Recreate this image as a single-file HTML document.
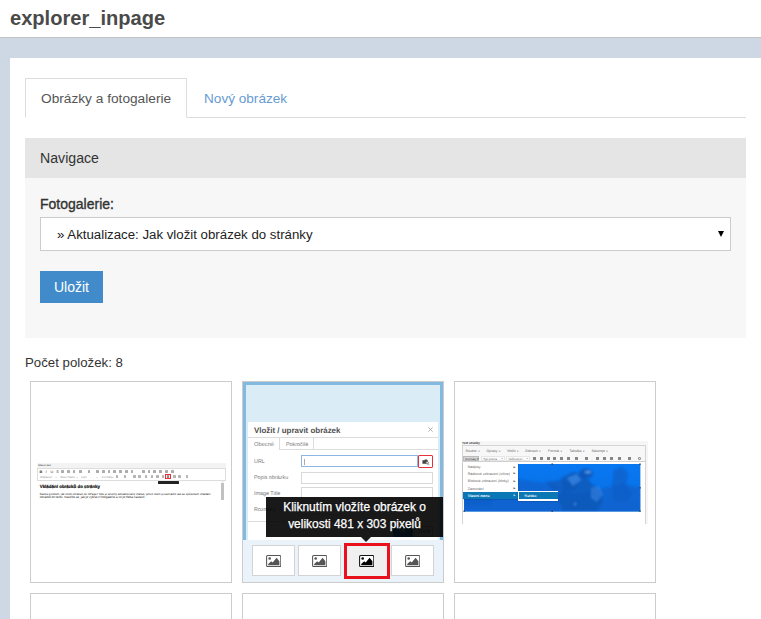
<!DOCTYPE html>
<html lang="cs">
<head>
<meta charset="utf-8">
<title>explorer_inpage</title>
<style>
*{box-sizing:border-box}
html,body{margin:0;padding:0}
body{width:761px;height:619px;overflow:hidden;background:#cdd8e4;font-family:"Liberation Sans",sans-serif;font-size:14px;color:#333;position:relative}
.top{position:absolute;left:0;top:0;width:761px;height:38px;background:#fff;border-bottom:1px solid #c2c2c2}
.top h1{position:absolute;left:10px;top:7px;margin:0;font-size:20.1px;line-height:22px;font-weight:bold;color:#4a4a4a;white-space:nowrap}
.panel{position:absolute;left:10px;top:58px;width:760px;height:600px;background:#fff}
.tabs{position:absolute;left:15px;top:20px;width:721px;height:40px;border-bottom:1px solid #ddd}
.tab{position:absolute;top:0;height:40px;line-height:40px;white-space:nowrap;font-size:14px}
.tab.active{left:0;width:162px;border:1px solid #ddd;border-bottom:1px solid #fff;font-size:13.7px;background:#fff;color:#555;padding-left:15px;line-height:40px}
.tab.link{left:179px;color:#679bd2;font-size:13.6px;line-height:41px}
.nav{position:absolute;left:15px;top:80px;width:721px;height:200px;background:#f7f7f7}
.nav .hd{height:40px;background:#e5e5e5;line-height:40px;padding-left:15px;font-size:14.15px;color:#333}
.lbl{position:absolute;left:15px;top:57px;font-size:14px;color:#333;line-height:18px;-webkit-text-stroke:0.35px #333}
.sel{position:absolute;left:15px;top:79px;width:691px;height:34px;border:1px solid #ccc;background:#fff;line-height:34px;padding-left:16px;font-size:13.25px;color:#222}
.sel i{position:absolute;left:676.6px;top:13.2px;width:0;height:0;border-left:3.4px solid transparent;border-right:3.4px solid transparent;border-top:6.6px solid #000}
.btn{position:absolute;left:15px;top:133px;width:63px;height:32px;background:#428bca;color:#fff;font-size:14px;line-height:33px;text-align:center}
.cnt{position:absolute;left:15px;top:295px;line-height:20px;font-size:13.25px;color:#333}
.it{position:absolute;width:202px;height:202px;border:1px solid #ccc;background:#fff;overflow:hidden}

#ov{position:absolute;left:0;top:0;width:761px;height:619px;overflow:hidden;text-rendering:geometricPrecision}
#ov div,#ov span,#ov i{position:absolute;white-space:nowrap;line-height:1}
/* thumb 2 */
.t2ring{left:243px;top:382px;width:200px;height:200px;background:#daedf6;border:3px solid #82b9e0}
.t2dlg{left:248.4px;top:422.3px;width:189.5px;height:120px;background:#fff}
.t2dlg .ttl{left:5.6px;top:4.7px;font-size:7.95px;font-weight:bold;color:#505050}
.t2dlg .x{left:179px;top:3.2px;font-size:8px;color:#999}
.t2dlg .l1{left:0;top:14.6px;width:189.5px;height:0.8px;background:#ddd}
.t2dlg .tb1{left:0;top:15.4px;width:31.3px;height:12.1px;border-right:0.8px solid #ddd;background:#fff}
.t2dlg .tb2{left:31.3px;top:15.4px;width:34.6px;height:12.1px;border-right:0.8px solid #ddd;border-bottom:0.8px solid #ddd}
.t2dlg .l2{left:65.9px;top:26.7px;width:123.6px;height:0.8px;background:#ddd}
.t2dlg .tx{font-size:5.4px;color:#777}
.t2dlg .lb{left:5.6px;font-size:5.4px;color:#777}
.t2dlg .in{left:53px;width:131.2px;height:12px;border:0.8px solid #d9d9d9;background:#fff}
.t2tip{text-rendering:auto;left:266px;top:497px;width:177px;height:40px;background:rgba(0,0,0,.9);color:#fff;font-size:11.95px;text-align:center}
.t2tip span{left:0;width:177px;text-align:center;-webkit-text-stroke:0.25px #fff}
.t2arr{left:361.2px;top:536.7px;width:0;height:0;border-left:5px solid transparent;border-right:5px solid transparent;border-top:5px solid #1a1a1a}
.t2strip{left:243px;top:540px;width:200px;height:42px;background:#eaf3f9}
.t2b{top:545.4px;width:42.6px;height:31px;background:#fff;border:1px solid #d3d3d3}
.t2red{left:344px;top:543px;width:46px;height:36px;border:3px solid #e8111c;background:#f0f0f0}
#ov svg{position:absolute}

/* thumb 1 */
.t1 .ic{top:469.5px;width:2.5px;height:3px;background:#666;opacity:.55;border-radius:.6px}
.t1 .ic2{top:475.3px;width:2.6px;height:2.8px;background:#777;opacity:.55;border-radius:.6px}
.t1 .dd{top:476.2px;font-size:2.9px;color:#999}
.t1 p{position:absolute;margin:0;white-space:nowrap;line-height:1;font-size:2.62px;color:#222;left:39.7px}
/* thumb 3 */
.t3 .mn{top:449.7px;font-size:3.5px;color:#666}
.t3 .mi{left:467.8px;font-size:3.55px;color:#666}
.t3 .ar{left:513.6px;font-size:2.6px;color:#555}
.t3 .ti{top:456.7px;width:3px;height:3.6px;background:#555;opacity:.7}
</style>
</head>
<body>
<div class="top"><h1>explorer_inpage</h1></div>
<div class="panel">
  <div class="tabs">
    <div class="tab active">Obrázky a fotogalerie</div>
    <div class="tab link">Nový obrázek</div>
  </div>
  <div class="nav">
    <div class="hd">Navigace</div>
    <div class="lbl">Fotogalerie:</div>
    <div class="sel">» Aktualizace: Jak vložit obrázek do stránky<i></i></div>
    <div class="btn">Uložit</div>
  </div>
  <div class="cnt">Počet položek: 8</div>
  <div class="it" style="left:20px;top:323px"></div>
  <div class="it" style="left:232px;top:323px"></div>
  <div class="it" style="left:444px;top:323px"></div>
  <div class="it" style="left:20px;top:535px"></div>
  <div class="it" style="left:232px;top:535px"></div>
  <div class="it" style="left:444px;top:535px"></div>
</div>

<div id="ov">
<!-- thumb 1 -->
<div class="t1" style="left:0;top:0">
<div style="left:37px;top:463px;width:189px;height:37px;background:#fff"></div>
<div style="left:37px;top:463.4px;width:189px;height:4.6px;background:#f3f3f3"></div>
<span style="left:38.2px;top:464.9px;font-size:2.5px;font-weight:bold;color:#555">Hlavní text</span>
<div style="left:37.3px;top:467.5px;width:188.4px;height:13.1px;border:0.7px solid #ddd;background:#fff"></div>
<span style="left:39.6px;top:470.6px;font-size:3.8px;font-weight:bold;color:#333">B</span><span style="left:45.6px;top:470.6px;font-size:3.8px;font-style:italic;color:#333">I</span><span style="left:50.4px;top:470.6px;font-size:3.8px;color:#333">U</span><span style="left:56.2px;top:470.6px;font-size:3.8px;color:#333">S</span><i class="ic" style="left:61.4px"></i><i class="ic" style="left:67.0px"></i><i class="ic" style="left:72.8px"></i><i class="ic" style="left:79.0px"></i><i class="ic" style="left:87.7px"></i><i class="ic" style="left:96.3px"></i><i class="ic" style="left:102.2px"></i><i class="ic" style="left:107.7px"></i><i class="ic" style="left:113.1px"></i><i class="ic" style="left:119.0px"></i><i class="ic" style="left:125.0px"></i><i class="ic" style="left:130.7px"></i><i class="ic" style="left:142.1px"></i><i class="ic" style="left:147.6px"></i><i class="ic" style="left:153.1px"></i><i class="ic" style="left:159.0px"></i><i class="ic" style="left:165.2px"></i><i class="ic" style="left:171.2px"></i>
<i class="ic2" style="left:115.6px"></i><i class="ic2" style="left:123.6px"></i><i class="ic2" style="left:133.1px"></i><i class="ic2" style="left:138.2px"></i><i class="ic2" style="left:144.9px"></i><i class="ic2" style="left:150.6px"></i><i class="ic2" style="left:156.2px"></i><i class="ic2" style="left:161.6px"></i><i class="ic2" style="left:173.1px"></i><i class="ic2" style="left:178.2px"></i><i class="ic2" style="left:185.6px"></i>
<span class="dd" style="left:40px">Odstavec</span><span class="dd" style="left:55.5px;font-size:2px;top:476.6px">▾</span><span class="dd" style="left:60.2px">Open Sans</span><span class="dd" style="left:76.6px;font-size:2px;top:476.6px">▾</span><span class="dd" style="left:81px">12pt</span><span class="dd" style="left:96.6px;font-size:2px;top:476.6px">▾</span><span class="dd" style="left:101.8px">Formáty</span><span class="dd" style="left:112.3px;font-size:2px;top:476.6px">▾</span>
<div style="left:165.4px;top:473.6px;width:5.8px;height:5.6px;border:0.8px solid #e8303a;background:#fbe3e3"></div><i class="ic2" style="left:166.9px;background:#444"></i>
<div style="left:157.6px;top:480.6px;width:21.4px;height:3.5px;background:#222;border-radius:.5px"><span style="left:2px;top:.8px;font-size:1.75px;color:#fff">Vložit / upravit obrázek</span></div>
<div style="left:221px;top:481.3px;width:3.3px;height:18.7px;background:#f1f1f1"></div><div style="left:221.3px;top:483.4px;width:2.7px;height:16.6px;background:#c1c1c1"></div>
<span style="left:39.7px;top:484.9px;font-size:4.45px;font-weight:bold;color:#111;-webkit-text-stroke:.2px #222">Vkládání obrázků do stránky</span>
<p style="top:493px;font-size:2.88px" id="p1">Řešíte problém, jak vložit obrázek do inPage? Zde je stručný aktualizovaný článek, jehož cílem je seznámit vás se způsobem vkládání</p>
<p style="top:495.9px;font-size:3.1px" id="p2">obrázků do textu. Naučíte se, jak je vybrat z fotogalerie a co je třeba nastavit.</p>
</div>
<!-- thumb 3 -->
<div class="t3" style="left:0;top:0">
<div style="left:461.5px;top:440.5px;width:186.5px;height:83.2px;background:#f6f6f6"></div>
<span style="left:462px;top:442.2px;font-size:3.1px;font-weight:bold;color:#333">Text stránky</span>
<div style="left:462.3px;top:445.3px;width:183.6px;height:79px;border:0.7px solid #d4d4d4;border-bottom:0;background:#fff"></div>
<div style="left:463px;top:446px;width:182.2px;height:15.5px;background:#f7f7f7;border-bottom:0.7px solid #d0d0d0"></div>
<span class="mn" style="left:465.5px">Soubor <span style="position:static;font-size:2.4px">▼</span></span><span class="mn" style="left:486.5px">Úpravy <span style="position:static;font-size:2.4px">▼</span></span><span class="mn" style="left:507.0px">Vložit <span style="position:static;font-size:2.4px">▼</span></span><span class="mn" style="left:525.0px">Zobrazit <span style="position:static;font-size:2.4px">▼</span></span><span class="mn" style="left:548.0px">Formát <span style="position:static;font-size:2.4px">▼</span></span><span class="mn" style="left:569.5px">Tabulka <span style="position:static;font-size:2.4px">▼</span></span><span class="mn" style="left:591.8px">Nástroje <span style="position:static;font-size:2.4px">▼</span></span>
<div style="left:463.2px;top:455.8px;width:16.3px;height:5.6px;background:#d8d8d8;border:0.5px solid #bbb"><span style="left:1px;top:1.2px;font-size:3px;color:#333">Formáty ▾</span></div><div style="left:481px;top:455.8px;width:23.5px;height:5.6px;background:#fbfbfb;border:0.5px solid #e6e6e6"><span style="left:1.2px;top:1.2px;font-size:3px;color:#666">Typ písma</span><span style="left:19.5px;top:1.6px;font-size:2.2px;color:#666">▾</span></div><div style="left:506.2px;top:455.8px;width:23.5px;height:5.6px;background:#fbfbfb;border:0.5px solid #e6e6e6"><span style="left:1.2px;top:1.2px;font-size:3px;color:#666">Velikost pí...</span><span style="left:19.5px;top:1.6px;font-size:2.2px;color:#666">▾</span></div>
<i class="ti" style="left:532.6px"></i><i class="ti" style="left:540.0px"></i><i class="ti" style="left:547.1px"></i><i class="ti" style="left:553.1px"></i><i class="ti" style="left:559.6px"></i><i class="ti" style="left:566.6px"></i><i class="ti" style="left:575.1px"></i><i class="ti" style="left:584.6px"></i><i class="ti" style="left:596.1px"></i><i class="ti" style="left:602.6px"></i><i class="ti" style="left:609.6px"></i><i class="ti" style="left:617.6px"></i><i class="ti" style="left:627.6px"></i><i class="ti" style="left:637.6px;border-radius:50%;background:none;border:.5px solid #666"></i>
<svg style="left:464px;top:464px;overflow:visible" width="176.4" height="47.6" viewBox="0 0 176.4 47.6"><defs><linearGradient id="bg3" x1="0" y1="0" x2="0" y2="1"><stop offset="0" stop-color="#0878f2"/><stop offset=".45" stop-color="#0973ea"/><stop offset="1" stop-color="#0b69da"/></linearGradient><clipPath id="cp3"><rect width="176.4" height="47.6"/></clipPath><filter id="bl3" x="-20%" y="-20%" width="140%" height="140%"><feGaussianBlur stdDeviation="0.9"/></filter></defs><rect width="176.4" height="47.6" fill="url(#bg3)"/><g clip-path="url(#cp3)"><g filter="url(#bl3)"><path d="M0 22 L30 12 L60 16 L86 20 L110 30 L140 24 L160 20 L176.4 24 V47.6 H0z" fill="#0c62cc" opacity=".75"/><g transform="translate(19,0)"><path d="M78 14 l12-6 12 3 6 8 8 6 4 12 -6 10 h-34 l-6-14 6-8z" fill="#0d57b8" opacity=".8"/><path d="M131 6 l8-3 6 6 -2 12 6 8 -4 8 h-14 l-2-14z" fill="#0c5ec6" opacity=".7"/><path d="M62 18 l18-2 16 4 -4 6 -22 0z" fill="#0d57b8" opacity=".7"/><ellipse cx="103" cy="9.5" rx="7" ry="5" fill="#0e58ba" opacity=".9"/><ellipse cx="105" cy="8" rx="3.2" ry="1.6" fill="#5ba2f0" opacity=".8"/><path d="M84 14 l10-4 4 6 -8 6z" fill="#4c96ee" opacity=".55"/><path d="M108 24 l8-2 4 8 -6 8 -6-4z" fill="#3f8cea" opacity=".5"/><circle cx="92" cy="40" r="4.5" fill="#0d55b4" opacity=".8"/><circle cx="92" cy="40" r="1.8" fill="#3f8cea" opacity=".7"/></g><path d="M0 30 l20-8 16 4 -10 16 h-26z" fill="#0c5fc8" opacity=".7"/></g></g><g fill="#345" opacity=".8"><rect x="-.6" y="-.6" width="1.6" height="1.6"/><rect x="87.4" y="-.6" width="1.6" height="1.6"/><rect x="175.2" y="-.6" width="1.6" height="1.6"/><rect x="175.2" y="23" width="1.6" height="1.6"/><rect x="-.6" y="46.4" width="1.6" height="1.6"/><rect x="87.4" y="46.4" width="1.6" height="1.6"/><rect x="175.2" y="46.4" width="1.6" height="1.6"/></g></svg>
<div style="left:463px;top:462.3px;width:55px;height:37.2px;background:#fff;box-shadow:0 .5px 1.5px rgba(0,0,0,.3)"></div>
<span class="mi" style="top:466.0px">Nadpisy</span><span class="ar" style="top:466.5px">▶</span><span class="mi" style="top:472.9px">Řádkové zobrazení (inline)</span><span class="ar" style="top:473.4px">▶</span><span class="mi" style="top:480.4px">Blokové zobrazení (bloky)</span><span class="ar" style="top:480.9px">▶</span><span class="mi" style="top:487.5px">Zarovnání</span><span class="ar" style="top:488.0px">▶</span>
<div style="left:463px;top:492.2px;width:55px;height:7px;background:#0a78b4"><span style="left:4.8px;top:2.6px;font-size:3.5px;font-weight:bold;color:#fff">Vlastní menu</span><span style="left:50.6px;top:2.4px;font-size:2.6px;color:#cde">▶</span></div>
<div style="left:518.4px;top:491px;width:40px;height:9.8px;background:#fff;box-shadow:0 .5px 1.5px rgba(0,0,0,.3)"></div><div style="left:518.8px;top:492.3px;width:39px;height:6.8px;background:#0a78b4"><span style="left:5.5px;top:2.4px;font-size:3.2px;font-weight:bold;color:#fff">Tlačítko</span></div>
</div>
  <!-- thumb 2 -->
  <div class="t2ring"></div>
  <div class="t2dlg">
    <span class="ttl">Vložit / upravit obrázek</span><svg style="left:179.4px;top:5.2px" width="5" height="5" viewBox="0 0 5 5"><path d="M.4.4l4.2 4.2M4.6.4L.4 4.6" stroke="#9a9a9a" stroke-width=".8" fill="none"/></svg>
    <div class="l1"></div>
    <div class="tb1"><span class="tx" style="left:5.6px;top:5.5px;font-size:5.75px">Obecné</span></div>
    <div class="tb2"><span class="tx" style="left:6.3px;top:5.6px">Pokročilé</span></div>
    <div class="l2"></div>
    <span class="lb" style="top:38px">URL</span>
    <div class="in" style="top:33.1px;width:117px;border-color:#8db5e6"><i style="left:1.2px;top:2.6px;width:0.6px;height:6px;background:#aaa"></i></div>
    <div style="left:169.7px;top:33.1px;width:14.6px;height:12.8px;border:1.2px solid #e6303a;border-radius:1px;background:#fff"></div><svg style="left:173.2px;top:36.3px" width="8" height="7" viewBox="0 0 8 7"><path d="M.4 1.2h2l.6-.8h2.2v.8h.6v3.6H.4z" fill="#444"/><circle cx="5.2" cy="3.8" r="1.3" fill="#ddd" stroke="#555" stroke-width=".6"/><path d="M6.1 4.8l1.2 1.4" stroke="#666" stroke-width=".7"/></svg>
    <span class="lb" style="top:53.5px">Popis obrázku</span>
    <div class="in" style="top:49.3px"></div>
    <span class="lb" style="top:69.8px">Image Title</span>
    <div class="in" style="top:65.2px"></div>
    <span class="lb" style="top:85.6px">Rozměry</span>
    <div class="in" style="top:80.6px;width:40px"></div>
    <div style="left:0;top:98.6px;width:189.5px;height:0.8px;background:#ddd"></div>
    <div style="left:144.6px;top:104px;width:19.7px;height:10.3px;background:#2d8ac7"><span style="left:6px;top:3px;font-size:5px;color:#fff">Ok</span></div>
    <div style="left:166px;top:104px;width:19px;height:10.3px;border:0.8px solid #ccc;background:#f4f4f4"><span style="left:2.5px;top:3px;font-size:5px;color:#555">Zrušit</span></div>
  </div>
  <div class="t2strip"></div>
  <div class="t2tip"><span style="top:5.3px">Kliknutím vložíte obrázek o</span><span style="top:22.3px">velikosti 481 x 303 pixelů</span></div>
  <div class="t2arr"></div>
  <div class="t2b" style="left:252.3px"></div>
  <div class="t2b" style="left:298.2px"></div>
  <div class="t2red"></div>
  <div class="t2b" style="left:391.2px"></div>
  <svg style="left:265.8px;top:554.8px" width="15.4" height="12.2" viewBox="0 0 15.4 12.2"><rect x=".6" y=".6" width="14.2" height="11" rx="1" fill="#fff" stroke="#555" stroke-width="1.05"/><path d="M2.2 10.3V9l3-2.8 1.5 1.2 3.9-4.6 2.8 3.4v4.1z" fill="#555"/><circle cx="3.7" cy="3.5" r="1.3" fill="#555"/></svg>
  <svg style="left:311.7px;top:554.8px" width="15.4" height="12.2" viewBox="0 0 15.4 12.2"><rect x=".6" y=".6" width="14.2" height="11" rx="1" fill="#fff" stroke="#555" stroke-width="1.05"/><path d="M2.2 10.3V9l3-2.8 1.5 1.2 3.9-4.6 2.8 3.4v4.1z" fill="#555"/><circle cx="3.7" cy="3.5" r="1.3" fill="#555"/></svg>
  <svg style="left:358.5px;top:554.8px" width="15.4" height="12.2" viewBox="0 0 15.4 12.2"><rect x=".6" y=".6" width="14.2" height="11" rx="1" fill="#fff" stroke="#111" stroke-width="1.05"/><path d="M2.2 10.3V9l3-2.8 1.5 1.2 3.9-4.6 2.8 3.4v4.1z" fill="#000"/><circle cx="3.7" cy="3.5" r="1.3" fill="#000"/></svg>
  <svg style="left:404.7px;top:554.8px" width="15.4" height="12.2" viewBox="0 0 15.4 12.2"><rect x=".6" y=".6" width="14.2" height="11" rx="1" fill="#fff" stroke="#555" stroke-width="1.05"/><path d="M2.2 10.3V9l3-2.8 1.5 1.2 3.9-4.6 2.8 3.4v4.1z" fill="#555"/><circle cx="3.7" cy="3.5" r="1.3" fill="#555"/></svg>
</div>
</body>
</html>
